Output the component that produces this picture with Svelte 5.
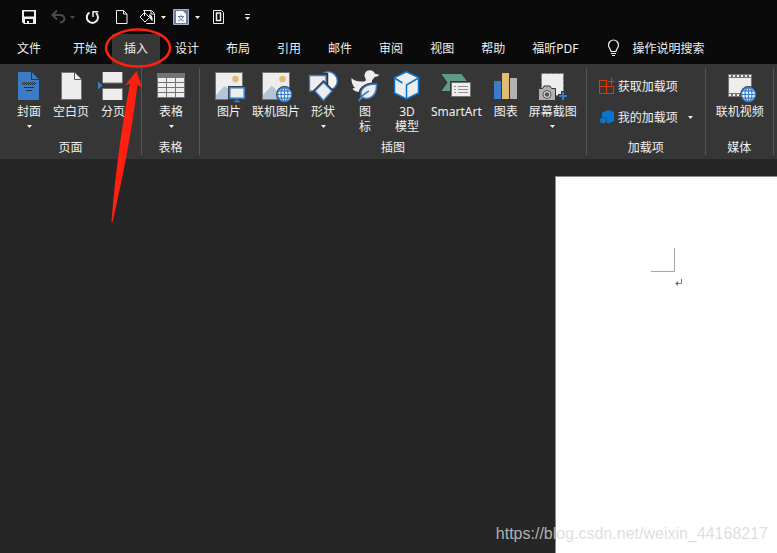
<script>
  const tabs = ['开始', '插入', '设计', '布局', '引用', '邮件', '审阅', '视图', '帮助', '福昕PDF'];
  let active = $state('插入');

  const pages = [
    { id: 'cover', label: '封面', box: '8 70 42 34', menu: true },
    { id: 'blank', label: '空白页', box: '50 70 42 34' },
    { id: 'break', label: '分页', box: '92 70 42 34' }
  ];
  const tables = [{ id: 'table', label: '表格', box: '150 70 42 34', menu: true }];
  const illustrations = [
    { id: 'picture', label: '图片', box: '208 70 42 34' },
    { id: 'online', label: '联机图片', box: '255 70 42 34' },
    { id: 'shapes', label: '形状', box: '302 70 42 34', menu: true },
    { id: 'icons', label: '图\n标', box: '345 70 42 34' },
    { id: 'model', label: '3D\n模型', box: '387 70 42 34' },
    { id: 'smart', label: 'SmartArt', box: '436 70 42 34', wide: true },
    { id: 'chart', label: '图表', box: '485 70 42 34' },
    { id: 'shot', label: '屏幕截图', box: '532 70 42 34', menu: true }
  ];
  const media = [{ id: 'video', label: '联机视频', box: '719 70 42 34' }];
</script>

{#snippet caret()}
  <svg class="caret" viewBox="0 0 5 3" width="5" height="3" aria-hidden="true"><path d="M0 0h5L2.5 3z" fill="currentColor" /></svg>
{/snippet}

{#snippet globe(x, y)}
  <g transform="translate({x} {y})">
    <circle r="8.4" fill="#363636" />
    <circle r="7" fill="#f2f6fa" stroke="#3a7cc8" stroke-width="1.3" />
    <path d="M-7 0H7M0-7V7M-6-3.6H6M-6 3.6H6" stroke="#3a7cc8" stroke-width="1.2" />
    <ellipse rx="3.5" ry="7" fill="none" stroke="#3a7cc8" stroke-width="1.2" />
  </g>
{/snippet}

{#snippet photo(x)}
  <g transform="translate({x} 72)">
    <rect x=".5" y=".5" width="27" height="27" fill="#ededed" stroke="#747474" />
    <path d="M1 23 9.5 14l3 2 8 11H1z" fill="#b3c5d6" />
    <circle cx="20.5" cy="7" r="3.2" fill="#e2ba70" />
  </g>
{/snippet}

{#snippet art(id, box)}
  <svg class="art" viewBox={box} width="42" height="34" aria-hidden="true">
    {#if id === 'cover'}
      <path d="M18 72h13v8h8v20H18z" fill="#3a7cc8" />
      <path d="M32 72.5v6.5h6.5z" fill="#3a7cc8" />
      <path d="M22 82.5h13M23 83.5h13M22 84.5h13" stroke="#252f3c" stroke-dasharray="1 1" />
      <path d="M24 87.5h10M26 90.5h6" stroke="#252f3c" />
    {:else if id === 'blank'}
      <path d="M61.5 72.5h13l7 7v20h-20z" fill="#ededed" stroke="#747474" />
      <path d="M74.5 72.5v7h7" fill="#ededed" stroke="#555" />
    {:else if id === 'break'}
      <path d="M102.5 72v11h20V72M102.5 100V88.5h20V100" fill="#ededed" stroke="#747474" />
      <path d="M98 81.5 102.500 85.500 98 89.500z" fill="#3a7cc8" />
    {:else if id === 'table'}
      <path d="M157 73h28v25h-28z" fill="#747474" />
      <path d="M158 78h8v4h-8zm9 0h8v4h-8zm9 0h8v4h-8zM158 83h8v4h-8zm9 0h8v4h-8zm9 0h8v4h-8zM158 88h8v4h-8zm9 0h8v4h-8zm9 0h8v4h-8zM158 93h8v4h-8zm9 0h8v4h-8zm9 0h8v4h-8z" fill="#ededed" />
    {:else if id === 'picture'}
      {@render photo(215)}
      <path d="M228 86h18v14h-18z" fill="#363636" />
      <rect x="229.7" y="87.7" width="14.6" height="10.6" fill="#ededed" stroke="#3a7cc8" stroke-width="1.7" />
      <path d="M234 101.5h6M237 99v2" stroke="#3a7cc8" stroke-width="1.3" />
    {:else if id === 'online'}
      {@render photo(262)}
      {@render globe(284.5, 94.5)}
    {:else if id === 'shapes'}
      <circle cx="328" cy="81" r="9.3" fill="#f5f5f5" stroke="#3a7cc8" stroke-width="1.3" />
      <path d="M308.500 74.500h18v17h-18z" fill="#ededed" stroke="#363636" stroke-width="3.5" />
      <path d="M309.500 75.500h16.500v15.500h-16.500z" fill="#ededed" stroke="#3a7cc8" stroke-width="1.3" />
      <path d="M323.500 80 334.500 91l-11 11L312.500 91z" fill="#363636" />
      <path d="M323.500 82.500 332 91l-8.500 9.500L315 91z" fill="#ededed" stroke="#3a7cc8" stroke-width="1.3" />
    {:else if id === 'icons'}
      <path d="M352.500 78c3 2.800 6.500 3.700 10.500 3.500h1.500c2 0 3-1.300 2-3a5.200 5.200 0 0 1 3.800-8.300c2.800-.2 4.800 1.200 5.700 3.500l4.200 1c-1 1.600-2.700 2.200-4.700 2.200-.6 1.500-1.500 2.300-2.500 3.100v3L362 92c-6 0-8-2-8.500-3.500l2.500-.5c-2.500-2.500-3.800-6-3.500-10z" fill="#ededed" />
      <path d="M362 97.500c-3-8 4-14 16.500-13.500 1 11-5 18-15 14z" fill="#ededed" stroke="#363636" stroke-width="3.500" />
      <path d="M362.500 97c-2.500-8 4-13 15-13 .5 10-5 17-14 13.500M359.500 101.500c2-5 6-8 10.500-10.500" fill="#ededed" stroke="#3a7cc8" stroke-width="1.500" />
    {:else if id === 'model'}
      <path d="M407.500 71.700 419.500 77.500v15.500l-12 6-12-6V77.500z" fill="#ededed" stroke="#0d74ce" stroke-width="1.500" />
      <path d="M395.500 78 403.500 83m16-5L407.500 85v14" fill="none" stroke="#0d74ce" stroke-width="1.500" />
    {:else if id === 'smart'}
      <path d="M442.500 74h20l6 8-8 9h-18l6-8.500z" fill="#5e9c87" />
      <path d="M451 81h22v17h-22z" fill="#363636" />
      <path d="M452.500 82.500h19v14h-19z" fill="#ededed" stroke="#747474" />
      <path d="M455 86.500h2m2 0h10M455 89.500h2m2 0h10M455 92.500h2m2 0h10" stroke="#929292" />
    {:else if id === 'chart'}
      <path d="M494 81h7v18h-7z" fill="#3a7cc8" />
      <path d="M502 73h7v26h-7z" fill="#e2ba70" />
      <path d="M510 78h7v21h-7z" fill="#b1b1b1" />
    {:else if id === 'shot'}
      <path d="M541.500 73.500h22v22h-22z" fill="#ededed" stroke="#747474" stroke-dasharray="3 2" />
      <path d="M538.500 88.500h4l1.500-2.500h6l1.500 2.500h4V100.500h-17z" fill="#b1b1b1" stroke="#363636" />
      <circle cx="547" cy="94.500" r="4" fill="#ddd" stroke="#4e4e4e" />
      <circle cx="547" cy="94.500" r="2.300" fill="#555" />
      <path d="M563 91v10M558 96h10" stroke="#363636" stroke-width="4" />
      <path d="M563 92v8M559 96h8" stroke="#3a7cc8" stroke-width="2" />
    {:else if id === 'video'}
      <path d="M728 74h24v23h-24z" fill="#747474" />
      <path d="M729 78h22v15h-22z" fill="#ededed" />
      <path d="M729 76h22M729 95h22" stroke="#ededed" stroke-width="2" stroke-dasharray="2 2" />
      {@render globe(748.5, 94.5)}
    {/if}
  </svg>
{/snippet}

{#snippet group(title, items)}
  <section class="group" aria-label={title}>
    <div class="items">
      {#each items as item}
        <button class="big" class:wide={item.wide}>
          {@render art(item.id, item.box)}
          <span>{item.label}</span>
          {#if item.menu}{@render caret()}{/if}
        </button>
      {/each}
    </div>
    <div class="title">{title}</div>
  </section>
{/snippet}

<div class="window">
  <header class="quick">
    <button aria-label="保存">
      <svg viewBox="21 7 22 20" width="22" height="20"><path fill="#f0f0f0" fill-rule="evenodd" d="M22 10h14v14H24l-2-2zm2 1.500v5h10v-5zm1 7.500v4h2v-2h2v2h4v-4z" /></svg>
    </button>
    <button class="dim" aria-label="撤消">
      <svg viewBox="49 7 19 20" width="19" height="20"><path d="M57 10.500 52.500 15l4.500 4.500M53 15h6.500c6.500 0 6.500 7.500.5 7.500" fill="none" stroke="#4b4b4b" stroke-width="2" /></svg>
      {@render caret()}
    </button>
    <button aria-label="重复">
      <svg viewBox="81 7 24 20" width="24" height="20"><path d="M89.500 12.500A5.600 5.600 0 1 0 96 13" fill="none" stroke="#f0f0f0" stroke-width="2" /><path d="M93 17v-6M92.300 11.700h6" fill="none" stroke="#f0f0f0" stroke-width="1.500" /></svg>
    </button>
    <button aria-label="新建">
      <svg viewBox="111 7 22 20" width="22" height="20"><path d="M116.500 10.500h7l3.500 3.500v9.500h-10.500zM123.500 10.500V14h3.500" fill="none" stroke="#f0f0f0" /></svg>
    </button>
    <button aria-label="底纹">
      <svg viewBox="139 7 20 20" width="20" height="20"><path d="M143.500 11v-.5h8l3 3v10h-8M151 10.500v3.500h3.500M144.500 12.500l5 5-4.500 4.500-5-5zM144.500 16v-5" fill="none" stroke="#f0f0f0" /><path d="M149 14c3 1 4 3 3.500 7.500L149.500 18z" fill="#f0f0f0" /></svg>
      {@render caret()}
    </button>
    <button aria-label="翻译">
      <svg viewBox="172 7 21 20" width="21" height="20"><path d="M173.500 9.500h15v15h-15z" fill="#6b7d98" stroke="#a6b4c9" /><path d="M176 11h7l3 3v9h-10z" fill="#f7f9fc" /><path d="M178 16.500h6M181 15v1.500m-2 0c1 3 3 4 5 4.500m-1-4.500c-1 3-3 4-5 4.500" fill="none" stroke="#53647d" stroke-width=".8" /></svg>
      {@render caret()}
    </button>
    <button aria-label="多页">
      <svg viewBox="206 7 24 20" width="24" height="20"><path d="M213.500 10.500h8l2 2v11h-10z" fill="none" stroke="#f0f0f0" /><path d="M216.500 13h4v7.500h-4z" fill="none" stroke="#f0f0f0" stroke-width="1.500" /></svg>
    </button>
    <button aria-label="自定义快速访问工具栏">
      <svg viewBox="236 7 22 20" width="22" height="20"><path d="M245 14.500h5" stroke="#f0f0f0" /><path d="M245 17h5l-2.500 3z" fill="#f0f0f0" /></svg>
    </button>
  </header>

  <nav class="tabs">
    <button class="file">文件</button>
    {#each tabs as tab}
      <button class:active={active === tab} onclick={() => (active = tab)}>{tab}</button>
    {/each}
    <label class="search">
      <svg viewBox="607 40 13 18" width="13" height="18" aria-hidden="true"><path d="M611 52.500c0-2.500-2.500-3-2.500-6.500a5 5 0 0 1 10 0c0 3.500-2.500 4-2.500 6.500zM611 54.500h5M612 56.500h3" fill="none" stroke="#f0f0f0" stroke-width="1.200" /></svg>
      <input type="text" placeholder="操作说明搜索" aria-label="操作说明搜索" />
    </label>
  </nav>

  <div class="ribbon">
    {@render group('页面', pages)}
    {@render group('表格', tables)}
    {@render group('插图', illustrations)}
    <section class="group addins" aria-label="加载项">
      <div class="rows">
        <button class="row">
          <svg viewBox="599 78 16 17" width="16" height="17" aria-hidden="true"><path d="M599.500 80.500h7v13h-7zM599.500 86.500h14v7h-7M611.500 78v7M608 81.500h7" fill="none" stroke="#d83b01" stroke-width="1.200" /></svg>
          <span>获取加载项</span>
        </button>
        <button class="row">
          <svg viewBox="599 109 16 17" width="16" height="17" aria-hidden="true"><path d="M602 112.500 608 110l6 2v9l-5.500 2.500-2-1c1-3-.5-5.500-4.500-5.500z" fill="#0d74ce" /><circle cx="603" cy="120.500" r="3" fill="#0d74ce" /></svg>
          <span>我的加载项</span>
          {@render caret()}
        </button>
      </div>
      <div class="title">加载项</div>
    </section>
    {@render group('媒体', media)}
  </div>

  <main class="desk">
    <article class="page">
      <svg viewBox="651 248 32 40" width="32" height="40" aria-hidden="true"><path d="M674.500 248v23.500H651" fill="none" stroke="#a6a6a6" /><path d="M681.500 279v4.500H676" fill="none" stroke="#777" /><path d="M675 283.500 678 281v5z" fill="#777" /></svg>
    </article>
  </main>

  <svg class="mark" viewBox="100 24 76 202" width="76" height="202" aria-hidden="true">
    <ellipse cx="138" cy="48" rx="32" ry="18.500" fill="none" stroke="#ff2010" stroke-width="2.500" />
    <path d="M136.500 71 142 87.500 137.500 84.500C132 131 123 176 112.500 222.500L111.500 222C115 176 121 131 130 83.500L125 85.500z" fill="#ff2010" />
  </svg>
  <div class="watermark">https://blog.csdn.net/weixin_44168217</div>
</div>

<style>
  :global(body) {
    margin: 0;
    background: #262626;
  }
  .window {
    position: relative;
    display: flex;
    flex-direction: column;
    min-height: 100vh;
    overflow: hidden;
    background: #262626;
    color: #f0f0f0;
    font: 12px/15px 'Noto Sans', 'Noto Sans CJK SC', sans-serif;
  }
  button,
  input {
    margin: 0;
    padding: 0;
    border: 0;
    background: none;
    color: inherit;
    font: inherit;
  }
  svg {
    display: block;
    flex: none;
  }
  .quick {
    display: flex;
    gap: 6px;
    height: 34px;
    padding-left: 21px;
    background: #0a0a0a;
  }
  .quick button {
    display: flex;
    align-items: center;
    gap: 2px;
  }
  .dim {
    color: #4b4b4b;
  }
  .tabs {
    display: flex;
    gap: 3px;
    height: 30px;
    padding-left: 5px;
    background: #0a0a0a;
  }
  .tabs button {
    padding: 0 12px 2px;
    white-space: nowrap;
  }
  .tabs .file {
    margin-right: 5px;
  }
  .tabs .active {
    background: #363636;
  }
  .search {
    display: flex;
    align-items: center;
    gap: 12px;
    padding: 0 0 2px 14px;
  }
  .search input {
    width: 120px;
    height: 20px;
  }
  .search input::placeholder {
    color: #f0f0f0;
    opacity: 1;
  }
  .ribbon {
    display: flex;
    height: 95px;
    background: #363636;
  }
  .group {
    display: flex;
    flex-direction: column;
    flex: none;
    margin: 4px 0;
    border-right: 1px solid #555;
  }
  .items {
    display: flex;
    flex: 1;
    padding: 2px 7px 0 8px;
  }
  .big {
    display: flex;
    flex-direction: column;
    align-items: center;
    min-width: 42px;
    padding: 0 2px;
    white-space: pre;
  }
  .big.wide {
    padding: 0 3px;
  }
  .big .art {
    margin: 0 -2px;
  }
  .big .caret {
    margin-top: 6px;
  }
  .title {
    text-align: center;
  }
  .rows {
    display: flex;
    flex: 1;
    flex-direction: column;
    gap: 14px;
    padding: 10px 12px 0 12px;
  }
  .row {
    display: flex;
    align-items: center;
    gap: 3px;
    white-space: nowrap;
  }
  .row .caret {
    margin-left: 7px;
  }
  .desk {
    display: grid;
    grid-template-columns: 5fr 2fr;
    flex: 1;
    padding-top: 17px;
  }
  .page {
    grid-column: 2;
    padding: 71px 0 0 95px;
    border: solid #8a8a8a;
    border-width: 1px 0 0 1px;
    background: #fff;
  }
  .mark {
    position: absolute;
    left: 100px;
    top: 24px;
    pointer-events: none;
  }
  .watermark {
    position: absolute;
    right: 9px;
    bottom: 9px;
    color: rgba(214, 214, 214, 0.8);
    font: 16px/20px 'Liberation Sans', sans-serif;
  }
</style>
